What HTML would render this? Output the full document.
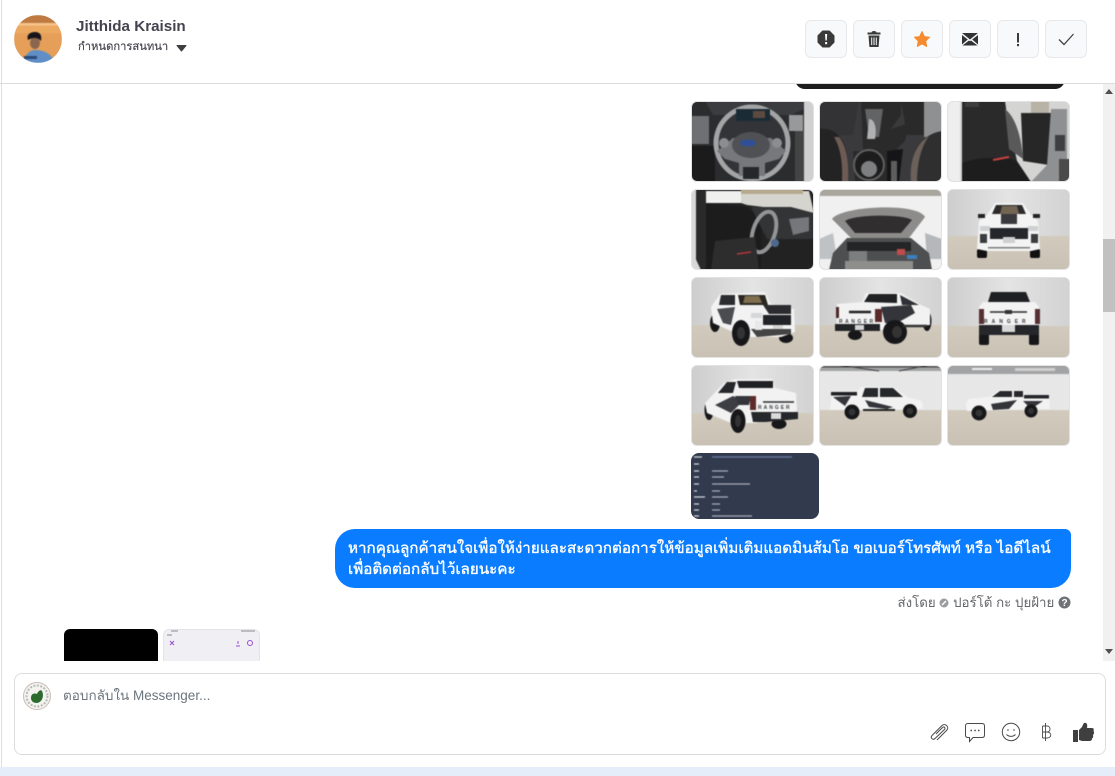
<!DOCTYPE html>
<html><head><meta charset="utf-8">
<style>
*{box-sizing:border-box}
html,body{margin:0;padding:0;width:1115px;height:776px;overflow:hidden;background:#fff;font-family:"Liberation Sans","Noto Sans CJK SC",sans-serif;color:#3e3e46}
.abs{position:absolute}
.btn{position:absolute;top:20px;width:42px;height:38px;background:#f8f9fa;border:1px solid #e6e8eb;border-radius:6px}
.btn svg{position:absolute;left:0;top:0;width:40px;height:36px}
.t{position:absolute;width:123px;height:80.500px;border-radius:6px;overflow:hidden;background:#ccc;border:1px solid #e2e2e2}
.t svg{position:absolute;left:-1px;top:-1px;display:block;width:123px;height:81px;filter:blur(.5px)}
.t text{font-family:"Liberation Sans",sans-serif;font-weight:bold}
</style></head><body>
<svg width="0" height="0" style="position:absolute"><defs>
<linearGradient id="w" x1="0" y1="0" x2="1" y2="0"><stop offset="0" stop-color="#cdcdcd"/><stop offset=".5" stop-color="#e4e4e4"/><stop offset="1" stop-color="#d2d2d2"/></linearGradient>
<linearGradient id="f" x1="0" y1="0" x2="0" y2="1"><stop offset="0" stop-color="#d2cbbd"/><stop offset="1" stop-color="#c8c1b4"/></linearGradient>
</defs></svg>

<div class="abs" style="left:1px;top:0;width:1px;height:767px;background:#dedede"></div>
<div class="abs" style="left:0;top:83px;width:1115px;height:1px;background:#dcdcdc"></div>
<div class="abs" style="left:0;top:767px;width:1115px;height:9px;background:#e4edf9"></div>

<svg class="abs" style="left:14px;top:15px" width="48" height="48" viewBox="0 0 48 48"><defs><clipPath id="av"><circle cx="24" cy="24" r="24"/></clipPath></defs><g clip-path="url(#av)" style="filter:blur(.4px)"><rect width="48" height="48" fill="#e59f59"/><rect width="48" height="8" fill="#bf7a42"/><rect y="8" width="48" height="2.500" fill="#f7c58b"/><rect y="10.500" width="48" height="8" fill="#eca962"/><path d="M9 48C11 40 15 35 21 35C29 35 36 38 39 44L36 48Z" fill="#5f8fc6"/><ellipse cx="21" cy="28" rx="5" ry="6" fill="#8a6650"/><path d="M14 25C12 19 17 17 21 17C26 17 28 20 27 26C24 22 19 22 14 25Z" fill="#17151a"/><rect x="10" y="41" width="13" height="3" fill="#2a4a78"/></g></svg>

<div class="abs" style="left:76px;top:17px;font-size:15.200px;font-weight:bold;line-height:20px;color:#45434f;white-space:nowrap">Jitthida Kraisin</div>
<div class="abs" style="left:78px;top:40px;font-size:11.200px;line-height:15px;color:#45434f;white-space:nowrap;-webkit-text-stroke:.15px #45434f">กำหนดการสนทนา</div>
<svg class="abs" style="left:176px;top:45px" width="11" height="7" viewBox="0 0 11 7"><path d="M1 .5H10L5.500 6Z" fill="#3f3f3f" stroke="#3f3f3f" stroke-linejoin="round"/></svg>

<div class="btn" style="left:805px"><svg viewBox="0 0 40 36"><path d="M16.700 10H23.300L28 14.700V21.300L23.300 26H16.700L12 21.300V14.700Z" fill="#3a3a3a" stroke="#3a3a3a" stroke-linejoin="round"/><path d="M19 13H21.200L20.800 19.500H19.400Z" fill="#f8f9fa"/><rect x="19.100" y="21" width="2" height="2.200" fill="#f8f9fa"/></svg></div>
<div class="btn" style="left:853px"><svg viewBox="0 0 40 36"><path d="M17.500 11.500C17.500 9.500 22.500 9.500 22.500 11.500H26.500V13.500H13.500V11.500Z" fill="#3a3a3a"/><path d="M14.500 14.500H25.500L24.600 26H15.400Z" fill="#3a3a3a"/><path d="M17.700 16.500V24M20 16.500V24M22.300 16.500V24" stroke="#f8f9fa" stroke-width="1"/></svg></div>
<div class="btn" style="left:901px"><svg viewBox="0 0 40 36"><path d="M20 10.500L22.300 15.600L27.500 16.300L23.700 20L24.700 25.500L20 22.800L15.300 25.500L16.300 20L12.500 16.300L17.700 15.600Z" fill="#f58a2e" stroke="#f58a2e" stroke-linejoin="round"/></svg></div>
<div class="btn" style="left:949px"><svg viewBox="0 0 40 36"><path d="M12 12H28L20 18.500Z" fill="#333"/><path d="M12 14L17.800 18.500L12 23.500ZM28 14L22.200 18.500L28 23.500ZM19 19.500L20 20.300L21 19.500L27.500 24.500H12.500Z" fill="#333"/></svg></div>
<div class="btn" style="left:997px"><svg viewBox="0 0 40 36"><path d="M20 12V21.500" stroke="#3a3a3a" stroke-width="2"/><rect x="19" y="23" width="2" height="2.200" fill="#3a3a3a"/></svg></div>
<div class="btn" style="left:1045px"><svg viewBox="0 0 40 36"><path d="M13 18.500L18 23.500L27.500 13" fill="none" stroke="#444" stroke-width="1.300"/></svg></div>

<div class="abs" style="left:795px;top:69px;width:270px;height:20px;background:#1c1c1c;border-radius:14px;clip-path:inset(15px 0 0 0)"></div>

<div class="t" style="left:691px;top:101px"><svg viewBox="0 0 123 81"><rect width="123" height="81" fill="#2b2c2e"/><rect y="15" width="18" height="28" fill="#6f7073"/><rect y="45" width="24" height="36" fill="#1b1b1c"/><rect x="98" y="14" width="14" height="16" fill="#97999b"/><rect x="104" y="30" width="9" height="51" fill="#444"/><rect x="113" y="0" width="10" height="81" fill="#d0d0d0"/><path d="M14 0H113V8L100 14H22Z" fill="#3b3c3f"/><circle cx="61" cy="42" r="35" fill="#333437"/><circle cx="61" cy="42" r="36" fill="none" stroke="#a3a4a6" stroke-width="5"/><rect x="45" y="8" width="34" height="12" fill="#1b2b35"/><rect x="62" y="10" width="12" height="7" fill="#5c4a3f"/><path d="M26 50L42 37H80L95 50L88 58L74 62V75H48V62L34 58Z" fill="#77787c"/><ellipse cx="60" cy="44" rx="19" ry="13" fill="#505155"/><ellipse cx="57" cy="42" rx="8" ry="3.500" fill="#2f4f96"/><rect x="52" y="66" width="16" height="12" fill="#26272a"/><circle cx="33" cy="42" r="5" fill="#8c8d90"/><circle cx="86" cy="42" r="5" fill="#8c8d90"/></svg></div>
<div class="t" style="left:819px;top:101px"><svg viewBox="0 0 123 81"><rect width="123" height="81" fill="#3a3a3c"/><path d="M0 0H40L34 34H0Z" fill="#333335"/><path d="M105 0H123V36H105Z" fill="#8f9091"/><path d="M82 0H105V34H88Z" fill="#2a2a2b"/><path d="M0 28C16 26 28 38 28 60V81H0Z" fill="#232324"/><path d="M20 36C27 44 30 60 29 81H23C24 60 21 46 15 36Z" fill="#6e5c54"/><path d="M94 81C90 52 100 34 123 30V81Z" fill="#2f2f30"/><path d="M92 81C90 58 98 42 110 35C102 46 98 62 98 81Z" fill="#6c605a"/><path d="M42 0H82V14L72 28L90 22L86 40L78 48L74 81H36L34 50H44Z" fill="#2a2a2b"/><path d="M46 8H64L60 36H50Z" fill="#626364"/><path d="M50 18C56 18 58 28 56 38H48Z" fill="#b0b1b2"/><circle cx="50" cy="64" r="15" fill="#1d1d1e" stroke="#606060" stroke-width="2"/><circle cx="50" cy="68" r="8" fill="#7e7f81"/><path d="M68 50L84 48L80 81H68Z" fill="#151517"/><rect x="72" y="60" width="6" height="21" fill="#5e5e5e"/></svg></div>
<div class="t" style="left:947px;top:101px"><svg viewBox="0 0 123 81"><rect width="123" height="81" fill="#d4d4d2"/><rect width="13" height="81" fill="#eeeeee"/><path d="M15 0H58L60 14L70 60L76 81H15Z" fill="#2a2a2b"/><path d="M18 0H32V6H18Z" fill="#3d3d3d"/><path d="M58 8C66 14 74 30 76 58L62 48Z" fill="#59595a"/><path d="M74 12H104L102 64L76 60Z" fill="#272728"/><path d="M84 0H102V12H84Z" fill="#b9b2a6"/><path d="M104 8H120V81H84L100 64Z" fill="#8e9092"/><rect x="108" y="34" width="10" height="16" fill="#3e3f41"/><rect x="112" y="58" width="11" height="23" fill="#4a4a4b"/><path d="M15 62C30 56 56 55 70 60L84 81H15Z" fill="#1d1d1e"/><path d="M46 59L62 56" stroke="#c9423f" stroke-width="2"/></svg></div>

<div class="t" style="left:691px;top:189px"><svg viewBox="0 0 123 81"><rect width="123" height="81" fill="#222223"/><path d="M14 2H118L123 24L56 16Z" fill="#d5d4ce"/><path d="M50 0H112V5H50Z" fill="#b7a98e"/><path d="M14 2H50V14L14 14Z" fill="#f0f0ee"/><rect width="5" height="81" fill="#d8d8d6"/><rect x="5" width="10" height="81" fill="#2a2a2a"/><path d="M0 60L10 81H0Z" fill="#d8d8d8"/><path d="M15 14L55 18L70 30L70 81H15Z" fill="#1c1c1d"/><path d="M60 18H100L123 24V50H76Z" fill="#333436"/><ellipse cx="73" cy="43" rx="11" ry="21" fill="none" stroke="#939496" stroke-width="4" transform="rotate(18 73 43)"/><path d="M98 30L118 28V42L102 46Z" fill="#76777a"/><path d="M24 52L64 48L68 81H20Z" fill="#2d2d2e"/><path d="M46 65L60 63" stroke="#b5363a" stroke-width="1.500"/><circle cx="84" cy="54" r="4" fill="#4d6a8c"/></svg></div>
<div class="t" style="left:819px;top:189px"><svg viewBox="0 0 123 81"><rect width="123" height="81" fill="#f0f0f0"/><rect width="123" height="7" fill="#a9a69d"/><path d="M0 50L14 44L18 70H0Z" fill="#bfc2c4"/><path d="M106 44L123 50V70H108Z" fill="#b4b8bb"/><path d="M13 30C22 17 98 13 106 28L90 49H32Z" fill="#8d8c8b"/><path d="M26 32C36 25 84 25 93 31L82 44H36Z" fill="#302e2f"/><path d="M28 49H92L110 64L113 81H10L14 64Z" fill="#4e4f50"/><rect x="28" y="53" width="64" height="9" fill="#242526"/><rect x="30" y="62" width="18" height="10" fill="#7d7e80"/><rect x="78" y="60" width="8" height="6" fill="#be4c4c"/><rect x="88" y="66" width="10" height="4" fill="#3d7fbe"/><rect x="26" y="72" width="68" height="9" fill="#8e8e8d"/></svg></div>
<div class="t" style="left:947px;top:189px"><svg viewBox="0 0 123 81"><rect width="123" height="81" fill="url(#w)"/><rect y="47" width="123" height="34" fill="url(#f)"/><rect x="30" y="60" width="10" height="9" rx="2" fill="#111"/><rect x="83" y="60" width="10" height="9" rx="2" fill="#111"/><path d="M40 26L48 14H76L84 26L91 32L93 60L84 62H40L30 60L32 32Z" fill="#f3f3f3"/><path d="M49 16H75L79 25H45Z" fill="#2c2a2a"/><path d="M55 17H70L72 25H53Z" fill="#a38e72" opacity=".6"/><rect x="54" y="25" width="16" height="10" fill="#3a3a3c"/><rect x="31" y="25" width="7" height="4" fill="#222"/><rect x="86" y="25" width="7" height="4" fill="#222"/><rect x="43" y="39" width="38" height="11" fill="#24262b"/><rect x="56" y="48" width="12" height="6" fill="#cfcfcf"/><rect x="33" y="37" width="10" height="5" fill="#cfd0d2"/><rect x="81" y="37" width="10" height="5" fill="#cfd0d2"/><rect x="33" y="45" width="7" height="9" fill="#3b3c40"/><rect x="84" y="45" width="7" height="9" fill="#3b3c40"/><rect x="41" y="58" width="42" height="1.500" fill="#7c7d80"/></svg></div>

<div class="t" style="left:691px;top:277px"><svg viewBox="0 0 123 81"><rect width="123" height="81" fill="url(#w)"/><rect y="48" width="123" height="33" fill="url(#f)"/><ellipse cx="24" cy="46" rx="5" ry="9" fill="#17171a"/><ellipse cx="95" cy="61" rx="7" ry="5" fill="#17171a"/><path d="M20 30L29 17L74 15L80 27L103 32L104 55L90 60H60L40 54L22 46Z" fill="#f2f2f2"/><path d="M30 18H44V28H28Z" fill="#2b2c2f"/><path d="M47 18H74L77 28H49Z" fill="#2a2722"/><path d="M54 19H68L71 26H52Z" fill="#a58e62" opacity=".7"/><path d="M72 28H100L100 37H78Z" fill="#2c2c30"/><path d="M26 32L44 30L40 48L32 46ZM30 38L38 34L36 46Z" fill="#4b4c50"/><rect x="72" y="38" width="28" height="10" fill="#222328"/><rect x="82" y="48" width="10" height="5" fill="#d6d6d6"/><rect x="60" y="36" width="11" height="5" fill="#d6d7d9"/><path d="M60 52L100 52V57L66 60Z" fill="#444"/><rect x="64" y="44" width="7" height="9" fill="#e8e8e8"/><ellipse cx="50" cy="56" rx="9" ry="13" fill="#17171a"/><ellipse cx="50" cy="56" rx="4" ry="6" fill="#333"/></svg></div>
<div class="t" style="left:819px;top:277px"><svg viewBox="0 0 123 81"><rect width="123" height="81" fill="url(#w)"/><rect y="48" width="123" height="33" fill="url(#f)"/><ellipse cx="36" cy="58" rx="7" ry="5" fill="#17171a"/><ellipse cx="108" cy="44" rx="4.500" ry="10" fill="#17171a"/><path d="M18 27L43 25L47 16H82L102 28L111 32V48L85 50L63 53H18Z" fill="#f2f2f2"/><path d="M45 25L50 17H78V26Z" fill="#202123"/><path d="M81 18L100 28H83Z" fill="#303136"/><path d="M62 30L92 28L96 36L78 46L66 46Z" fill="#34353a"/><path d="M30 35H52" stroke="#222" stroke-width="2.500"/><text x="20" y="46" font-size="5" letter-spacing="2.500" fill="#3a3b40">RANGER</text><rect x="56" y="32" width="7" height="13" fill="#5c2a2b"/><rect x="17" y="30" width="3" height="11" fill="#4c2728"/><rect x="16" y="47" width="45" height="7" fill="#222326"/><rect x="36" y="48" width="9" height="5" fill="#d4d4d4"/><circle cx="76" cy="55" r="12" fill="#17171a"/><ellipse cx="78" cy="55" rx="5" ry="6" fill="#333"/><path d="M84 49H108" stroke="#333" stroke-width="2.500"/></svg></div>
<div class="t" style="left:947px;top:277px"><svg viewBox="0 0 123 81"><rect width="123" height="81" fill="url(#w)"/><rect y="49" width="123" height="32" fill="url(#f)"/><rect x="32" y="56" width="10" height="12" rx="2" fill="#17171a"/><rect x="82" y="56" width="10" height="12" rx="2" fill="#17171a"/><path d="M41 25L44 15H79L83 25Z" fill="#1f2023"/><path d="M36 25H88L92 30V48H32V30Z" fill="#f3f3f3"/><rect x="32" y="32" width="5" height="15" fill="#563032"/><rect x="88" y="32" width="5" height="15" fill="#563032"/><path d="M43 35H80" stroke="#26272a" stroke-width="1.600"/><rect x="58" y="33" width="7" height="4" fill="#333"/><text x="37" y="46" font-size="5" letter-spacing="4" fill="#303135">RANGER</text><rect x="32" y="48" width="60" height="10" fill="#26272b"/><rect x="55" y="48" width="13" height="7" fill="#d8d8d8"/></svg></div>

<div class="t" style="left:691px;top:365px"><svg viewBox="0 0 123 81"><rect width="123" height="81" fill="url(#w)"/><rect y="48" width="123" height="33" fill="url(#f)"/><ellipse cx="18" cy="45" rx="4.500" ry="10" fill="#17171a"/><ellipse cx="88" cy="59" rx="7.500" ry="5" fill="#17171a"/><path d="M14 38L33 18L44 14H82L84 23L105 28L106 46L64 58H40L16 48Z" fill="#f2f2f2"/><path d="M36 17H45L42 28H27Z" fill="#26272a"/><path d="M46 16H82V23H48Z" fill="#202124"/><path d="M24 40L42 31L52 36L40 48Z" fill="#3d3e43"/><path d="M44 31H60L58 40H48Z" fill="#34353a"/><rect x="59" y="31" width="6" height="14" fill="#5c2a2b"/><path d="M72 37H103" stroke="#2a2b2e" stroke-width="1.600"/><text x="67" y="44" font-size="5" letter-spacing="2" fill="#3a3b3f">RANGER</text><path d="M60 47H107V54L75 57H62Z" fill="#26272b"/><rect x="80" y="48" width="10" height="6" fill="#dadada"/><ellipse cx="47" cy="56" rx="7.500" ry="12" fill="#17171a"/><ellipse cx="47" cy="56" rx="3" ry="6" fill="#333"/></svg></div>
<div class="t" style="left:819px;top:365px"><svg viewBox="0 0 123 81"><rect width="123" height="81" fill="#e7e7e7"/><rect width="123" height="6" fill="#a2a3a4"/><path d="M0 2H123M20 0L60 6M80 6L110 0" stroke="#3e3f41"/><rect y="45" width="123" height="36" fill="url(#f)"/><path d="M13 27H38L42 22H75L88 32L103 36L104 44L11 45Z" fill="#f2f2f2"/><rect x="12" y="27" width="26" height="3.500" fill="#202124"/><path d="M46 23H59V32H43Z" fill="#27282b"/><path d="M61 23H74L84 32H61Z" fill="#27282b"/><path d="M14 32L32 31L26 41ZM46 35L74 42L68 44L50 42Z" fill="#34353a"/><rect x="44" y="44" width="32" height="2" fill="#222"/><circle cx="33" cy="47" r="7.500" fill="#17171a"/><circle cx="33" cy="47" r="3.500" fill="#333"/><circle cx="91" cy="46" r="7" fill="#17171a"/><circle cx="91" cy="46" r="3.300" fill="#333"/></svg></div>
<div class="t" style="left:947px;top:365px"><svg viewBox="0 0 123 81"><rect width="123" height="81" fill="#e7e7e7"/><rect width="123" height="9" fill="#a2a3a4"/><rect x="25" y="3" width="20" height="2" fill="#eee"/><rect x="68" y="3" width="40" height="3" fill="#d0d0d0"/><rect y="45" width="123" height="36" fill="url(#f)"/><path d="M19 38L22 34L42 32L52 25H76L79 30H102L103 44L20 46Z" fill="#f2f2f2"/><path d="M45 32L53 26H65V32Z" fill="#27282b"/><path d="M67 26H76V32H67Z" fill="#27282b"/><rect x="77" y="30" width="25" height="3.500" fill="#24252a"/><path d="M44 39L70 35L62 44L46 45ZM76 36L96 36L84 44Z" fill="#34353a"/><circle cx="32" cy="48" r="7.500" fill="#17171a"/><circle cx="32" cy="48" r="3.500" fill="#333"/><circle cx="84" cy="46" r="6.500" fill="#17171a"/><circle cx="84" cy="46" r="3" fill="#333"/></svg></div>

<div class="t" style="left:691px;top:453px;width:128px;height:66px;background:#323a4e;border:0;border-radius:8px">
<svg viewBox="0 0 128 66" style="left:0;top:0;width:128px;height:66px;filter:blur(.5px)"><g stroke-width="1.300"><path d="M3 4H11M3 11H8M3 18H8M3 24H8M3 31H8M3 38H6M3 44H14M3 51H8M3 57H8M3 63H8" stroke="#d6d8de"/><path d="M21 4H101" stroke="#6d7fa3"/><path d="M21 18H37M21 24H33M21 31H59M21 38H29M21 44H37M21 51H29M21 57H29M21 63H61" stroke="#a8adb9"/></g></svg></div>

<div class="abs" style="left:335px;top:529px;width:736px;height:59px;background:#0a7cff;border-radius:20px 6px 20px 20px;color:#fff;font-size:15.200px;font-weight:500;line-height:21px;padding:9px 13px;white-space:nowrap;-webkit-text-stroke:.35px #fff">หากคุณลูกค้าสนใจเพื่อให้ง่ายและสะดวกต่อการให้ข้อมูลเพิ่มเติมแอดมินส้มโอ ขอเบอร์โทรศัพท์ หรือ ไอดีไลน์<br>เพื่อติดต่อกลับไว้เลยนะคะ</div>

<div class="abs" style="right:44px;top:594px;font-size:13.300px;line-height:18px;color:#65676b;white-space:nowrap">ส่งโดย <svg width="10" height="10" viewBox="0 0 10 10" style="vertical-align:-1px"><circle cx="5" cy="5" r="4.500" fill="#9a9c9f"/><path d="M3 7L7 3" stroke="#fff" stroke-width="1.400"/></svg> ปอร์โต้ กะ ปุยฝ้าย <svg width="13" height="13" viewBox="0 0 13 13" style="vertical-align:-2px"><circle cx="6.500" cy="6.500" r="6" fill="#6f7378"/><text x="6.500" y="10" text-anchor="middle" font-size="10" font-weight="bold" fill="#fff" font-family="Liberation Sans">?</text></svg></div>

<div class="abs" style="left:64px;top:629px;width:94px;height:32px;background:#000;border-radius:6px 6px 0 0"></div>
<div class="abs" style="left:163px;top:629px;width:97px;height:32px;background:#f0eff4;border:1px solid #e4e4e8;border-bottom:0;border-radius:6px 6px 0 0;overflow:hidden">
<svg width="97" height="32" viewBox="0 0 97 32" style="position:absolute;left:-1px;top:-1px;filter:blur(.3px)"><path d="M8 2H15M4 6H9M78 2H92" stroke="#8a8a8f"/><path d="M7 12L11 16M11 12L7 16" stroke="#9a4fd0"/><path d="M75 12V15M73 17H77" stroke="#9a4fd0"/><circle cx="87" cy="14" r="2.500" fill="none" stroke="#9a4fd0"/></svg></div>

<div class="abs" style="left:1103px;top:84px;width:12px;height:577px;background:#f1f1f1"></div>
<div class="abs" style="left:1103px;top:239px;width:12px;height:73px;background:#c1c1c1"></div>
<svg class="abs" style="left:1103px;top:84px" width="12" height="577" viewBox="0 0 12 577"><path d="M6 5L10 10H2Z" fill="#505050"/><path d="M2 565H10L6 570Z" fill="#505050"/></svg>

<div class="abs" style="left:14px;top:673px;width:1092px;height:82px;border:1px solid #dcdcdc;border-radius:8px;background:#fff"></div>
<svg class="abs" style="left:23px;top:682px" width="28" height="28" viewBox="0 0 28 28"><circle cx="14" cy="14" r="13.500" fill="#f4f3f0" stroke="#cbbcb8"/><circle cx="14" cy="14" r="10.500" fill="none" stroke="#b5bcb6" stroke-width="2" stroke-dasharray="2 1.500"/><path d="M8 16C8 11 12 11 14 12C15 9 18 7 19 9C21 13 20 20 14 21C10 21 8 19 8 16Z" fill="#2c6a2e"/></svg>
<div class="abs" style="left:63px;top:687px;font-size:13.500px;line-height:18px;color:#6c757d;white-space:nowrap">ตอบกลับใน Messenger...</div>

<svg class="abs" style="left:928px;top:720px" width="170" height="26" viewBox="0 0 170 26" fill="none" stroke="#4a4a4a" stroke-width="1">
<path d="M8 14L14.500 7.500C16 6 18 8 16.500 9.500L7 18.500C5 20.500 2 18 4 15.500L14 5.500C17 3 21.500 6.500 19 10L9 20"/>
<path d="M40 3.500H54C55.500 3.500 56.500 4.500 56.500 6V15C56.500 16.500 55.500 17.500 54 17.500H45L41.500 21.500V17.500H40C38.500 17.500 37.500 16.500 37.500 15V6C37.500 4.500 38.500 3.500 40 3.500Z"/>
<path d="M42.500 10.500H44M46.300 10.500H47.800M50 10.500H51.500" stroke-width="1.500"/>
<circle cx="83" cy="12" r="8.700"/><circle cx="80" cy="10" r=".8" fill="#4a4a4a" stroke="none"/><circle cx="86" cy="10" r=".8" fill="#4a4a4a" stroke="none"/><path d="M78.500 14.500C81 17 85 17 87.500 14.500"/>
<path d="M114.500 6H119C123 6 123 12 119 12H114.500M119 12C124 12 124 18 119 18H114.500M114.500 6V18M117.500 3V21" stroke-width=".9"/>
<path d="M145 10H150V22H145Z" fill="#3f3f3f" stroke="none"/><path d="M151 10L154 7C155 5 155 4 156 3C158 2 160 4 159 8H164C166 8 166 10 165.500 11C166.500 12.500 166 14 165 15C165.500 16.500 165 18 164 18.500C164 20.500 163 21 161 21H154L151 20Z" fill="#3f3f3f" stroke="none"/>
</svg>
</body></html>
